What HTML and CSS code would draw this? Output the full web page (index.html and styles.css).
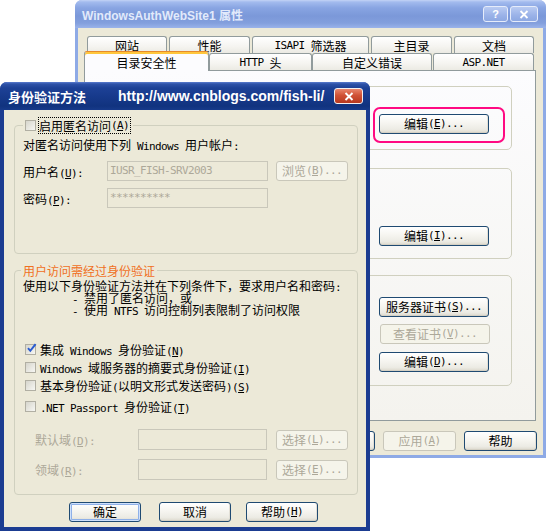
FILE: index.html
```html
<!DOCTYPE html>
<html lang="zh-CN">
<head>
<meta charset="utf-8">
<title>身份验证方法</title>
<link rel="stylesheet" href="styles.css">
</head>
<body>
<div class="win win-back">
  <div class="tbar tbar-inactive">
    <span class="tbar-title">WindowsAuthWebSite1 属性</span>
    <span class="tbar-btn tbar-help">?</span>
    <span class="tbar-btn tbar-x">
      <svg width="10" height="9" viewBox="0 0 10 9"><path d="M1.5 1 L8.5 8 M8.5 1 L1.5 8" stroke="#fff" stroke-width="1.8"/></svg>
    </span>
  </div>
  <div class="win-body back-body">
    <div class="tabrow tabrow-1">
      <div class="tab w80">网站</div>
      <div class="tab w81">性能</div>
      <div class="tab w117"><span class="m">ISAPI </span>筛选器</div>
      <div class="tab w81">主目录</div>
      <div class="tab w80">文档</div>
    </div>
    <div class="tabrow tabrow-2">
      <div class="tab tab-sel w125">目录安全性</div>
      <div class="tab w103"><span class="m">HTTP </span>头</div>
      <div class="tab w120">自定义错误</div>
      <div class="tab w101 gap1"><span class="m">ASP.NET</span></div>
    </div>
    <div class="pane">
      <div class="bgrp bg1">
        <div class="hl-wrap"><button class="btn bbtn">编辑<span class="m">(<u>E</u>)...</span></button></div>
      </div>
      <div class="bgrp bg2">
        <button class="btn bbtn bg2-btn">编辑<span class="m">(<u>I</u>)...</span></button>
      </div>
      <div class="bgrp bg3">
        <button class="btn bbtn bg3-b1">服务器证书<span class="m">(<u>S</u>)...</span></button>
        <button class="btn bbtn btn-dis bg3-b2">查看证书<span class="m">(<u>V</u>)...</span></button>
        <button class="btn bbtn bg3-b3">编辑<span class="m">(<u>D</u>)...</span></button>
      </div>
    </div>
    <div class="back-btns">
      <button class="btn wbtn">确定</button>
      <button class="btn wbtn">取消</button>
      <button class="btn wbtn btn-dis">应用<span class="m">(<u>A</u>)</span></button>
      <button class="btn wbtn">帮助</button>
    </div>
  </div>
</div>

<div class="win win-front">
  <div class="tbar tbar-active">
    <span class="ft-title">身份验证方法</span>
    <span class="ft-url">http://www.cnblogs.com/fish-li/</span>
    <span class="ft-close">
      <svg width="10" height="9" viewBox="0 0 10 9"><path d="M1.5 1 L8.5 8 M8.5 1 L1.5 8" stroke="#fff" stroke-width="1.9"/></svg>
    </span>
  </div>
  <div class="win-body front-body">
    <div class="grp fg1">
      <div class="legend lg1">
        <span class="cb"></span>
        <span class="focus">启用匿名访问<span class="m">(<u>A</u>)</span></span>
      </div>
      <div class="ftext">对匿名访问使用下列<span class="m"> Windows </span>用户帐户<span class="m">:</span></div>
      <div class="frow frow-user">
        <span class="flabel">用户名<span class="m">(<u>U</u>):</span></span>
        <span class="tbox tbox-long"><span class="m">IUSR_FISH-SRV2003</span></span>
        <button class="btn fbtn btn-dis">浏览<span class="m">(<u>B</u>)...</span></button>
      </div>
      <div class="frow frow-pwd">
        <span class="flabel">密码<span class="m">(<u>P</u>):</span></span>
        <span class="tbox tbox-long"><span class="m">**********</span></span>
      </div>
    </div>

    <div class="grp fg2">
      <div class="legend lg2">用户访问需经过身份验证</div>
      <div class="ftext2">使用以下身份验证方法并在下列条件下，要求用户名和密码<span class="m">:</span></div>
      <div class="ftext2 indent"><span class="m">- </span>禁用了匿名访问，或</div>
      <div class="ftext2 indent"><span class="m">- </span>使用<span class="m"> NTFS </span>访问控制列表限制了访问权限</div>

      <div class="cbrow cbrow-1">
        <span class="cb cb-on"><svg width="11" height="11" viewBox="0 0 11 11"><path d="M2 5.2 L4.3 7.8 L9.6 1.2" stroke="#2a5cd0" stroke-width="2" fill="none"/></svg></span>
        <span>集成<span class="m"> Windows </span>身份验证<span class="m">(<u>N</u>)</span></span>
      </div>
      <div class="cbrow">
        <span class="cb"></span>
        <span><span class="m">Windows </span>域服务器的摘要式身份验证<span class="m">(<u>I</u>)</span></span>
      </div>
      <div class="cbrow">
        <span class="cb"></span>
        <span>基本身份验证<span class="m">(</span>以明文形式发送密码<span class="m">)(<u>S</u>)</span></span>
      </div>
      <div class="cbrow cbrow-4">
        <span class="cb"></span>
        <span><span class="m">.NET Passport </span>身份验证<span class="m">(<u>T</u>)</span></span>
      </div>

      <div class="drow drow-1">
        <span class="dlabel">默认域<span class="m">(<u>D</u>):</span></span>
        <span class="tbox tbox-short"></span>
        <button class="btn dbtn btn-dis">选择<span class="m">(<u>L</u>)...</span></button>
      </div>
      <div class="drow drow-2">
        <span class="dlabel">领域<span class="m">(<u>R</u>):</span></span>
        <span class="tbox tbox-short"></span>
        <button class="btn dbtn btn-dis">选择<span class="m">(<u>E</u>)...</span></button>
      </div>
    </div>

    <div class="fbtns">
      <button class="btn wbtn btn-def">确定</button>
      <button class="btn wbtn fb-cancel">取消</button>
      <button class="btn wbtn fb-help">帮助<span class="m">(<u>H</u>)</span></button>
    </div>
  </div>
</div>
</body>
</html>
```

FILE: styles.css
```css
* { box-sizing: border-box; }
html, body { margin: 0; padding: 0; }
body {
  width: 547px;
  height: 532px;
  background: #ffffff;
  font-family: "Noto Sans CJK SC", sans-serif;
  font-size: 12px;
  color: #000;
  position: relative;
  overflow: hidden;
}
.m {
  font-family: "DejaVu Sans Mono", "Liberation Mono", monospace;
  font-size: 11px;
  letter-spacing: -0.62px;
  white-space: pre;
}
u { text-decoration: underline; text-underline-offset: 1px; }

/* windows */
.win {
  position: absolute;
  display: flex;
  flex-direction: column;
  border-radius: 7px 7px 0 0;
}
.win-back { left: 75px; top: 0; width: 471px; height: 458px; background: #8eaae6; }
.win-front { left: 0; top: 82px; width: 370px; height: 449px; background: #1b3c91; z-index: 5; }
.win-body { flex: 1; background: #ece9d8; }
.back-body { margin: 0 3px 3px; padding-top: 8px; }
.front-body { margin: 0 4px 4px; }

.tbar {
  height: 28px;
  flex: none;
  display: flex;
  align-items: center;
  border-radius: 7px 7px 0 0;
}
.tbar-inactive {
  background: linear-gradient(#c3d3f5 0, #a3bbee 2px, #88a4e2 8px, #7b98d9 16px, #839fdd 23px, #9ab3ea 28px);
  padding: 0 8px 0 7px;
}
.tbar-title {
  color: #e2eafb;
  font: bold 12px "Liberation Sans", "Noto Sans CJK SC", sans-serif;
}
.tbar-btn {
  height: 16px;
  border: 1px solid #e6ecfa;
  border-radius: 3px;
  background: linear-gradient(#b9cbf2, #9ab2e8 60%, #8da8e2);
  color: #fff;
  display: flex;
  align-items: center;
  justify-content: center;
  font: bold 11px "Liberation Sans", sans-serif;
}
.tbar-help { margin-left: auto; width: 25px; }
.tbar-x { margin-left: 2px; width: 28px; }

.tbar-active {
  background: linear-gradient(#5a7cce 0, #2e52a8 2px, #1d4196 6px, #173a8c 14px, #11337f 24px, #173a8a 28px);
  padding: 0 7px 0 8px;
  color: #fff;
}
.ft-title { font: bold 13px "Noto Sans CJK SC", sans-serif; }
.ft-url { margin-left: 32px; font: bold 14px "Liberation Sans", sans-serif; }
.ft-close {
  margin-left: auto;
  width: 29px;
  height: 16px;
  border: 1px solid #f4f0f0;
  border-radius: 3px;
  background: linear-gradient(#e9866c, #d05236 45%, #b8381e);
  display: flex;
  align-items: center;
  justify-content: center;
}

/* tabs */
.tabrow { display: flex; position: relative; }
.tabrow-1 { margin-left: 9px; height: 17px; gap: 2px; }
.tabrow-2 { margin-left: 6px; height: 18px; align-items: flex-start; z-index: 2; }
.tab {
  height: 17px;
  border: 1px solid #919b9c;
  border-bottom: none;
  border-radius: 3px 3px 0 0;
  background: linear-gradient(#ffffff, #f5f4f0 60%, #ebeae3);
  display: flex;
  align-items: center;
  justify-content: center;
  line-height: 15px;
  white-space: nowrap;
}
.tab-sel {
  height: 20px;
  margin-top: -2px;
  background: #fcfcfe;
  border-top: 1px solid #e68b2c;
  box-shadow: inset 0 2px 0 #ffc73c;
  padding-top: 1px;
}
.w80 { width: 80px; }
.w81 { width: 81px; }
.w117 { width: 117px; }
.w125 { width: 125px; }
.w103 { width: 103px; }
.w120 { width: 120px; }
.w101 { width: 101px; }
.gap1 { margin-left: 1px; }

.pane {
  margin: -1px 0 0 6px;
  width: 452px;
  height: 351px;
  border: 1px solid #919b9c;
  background: linear-gradient(#fcfcfe, #f4f3ee);
  position: relative;
  z-index: 1;
  display: flex;
  flex-direction: column;
}
.bgrp {
  margin-left: 9px;
  width: 418px;
  border: 1px solid #d0d0bf;
  border-radius: 5px;
  display: flex;
  flex-direction: column;
  align-items: flex-end;
}
.bg1 { margin-top: 15px; height: 64px; }
.bg2 { margin-top: 18px; height: 91px; }
.bg3 { margin-top: 16px; height: 111px; }
.hl-wrap {
  margin: 20px 6px 0 0;
  border: 2px solid #ff0a82;
  border-radius: 7px;
  padding: 5px 14px 7px 4px;
}
.bbtn { width: 110px; }
.bg2-btn { margin: 57px 22px 0 0; }
.bg3-b1 { margin: 21px 22px 0 0; }
.bg3-b2 { margin: 7px 21px 0 0; }
.bg3-b3 { margin: 8px 22px 0 0; }

.back-btns {
  display: flex;
  justify-content: flex-end;
  gap: 8px;
  margin-top: 10px;
  padding-right: 6px;
}

/* buttons */
.btn {
  height: 20px;
  padding: 0;
  border: 1px solid #1f4a72;
  border-radius: 3px;
  background: linear-gradient(#ffffff, #f6f5f0 45%, #ecebe4 80%, #dcd8cc);
  box-shadow: inset 0 -1px 0 #d4d0c4, inset -1px 0 0 #e2dfd6;
  font-family: "Noto Sans CJK SC", sans-serif;
  font-size: 12px;
  color: #000;
  display: flex;
  align-items: center;
  justify-content: center;
  line-height: 14px;
  white-space: nowrap;
}
.btn-dis {
  border-color: #c9c7ba;
  background: #f5f4ea;
  box-shadow: none;
  color: #aca899;
}
.btn-def {
  box-shadow: inset 0 0 0 1px #cee0fb, inset 0 0 0 2px #8fb0e8;
}
.wbtn { width: 73px; }

/* front groups */
.grp { border: 1px solid #d0d0bf; border-radius: 4px; }
.legend {
  display: flex;
  align-items: center;
  width: fit-content;
  height: 17px;
  margin-top: -9px;
  padding: 0 2px;
  background: #ece9d8;
}
.fg1 { margin: 15px 8px 0 10px; height: 129px; }
.lg1 { margin-left: 8px; }
.focus {
  margin-left: 2px;
  height: 17px;
  border: 1px dotted #000;
  display: flex;
  align-items: center;
  padding-right: 1px;
}
.ftext { margin-top: 3px; padding-left: 8px; line-height: 16px; height: 16px; }
.frow { display: flex; align-items: center; padding-left: 8px; height: 20px; }
.frow-user { margin-top: 8px; }
.frow-pwd { margin-top: 7px; }
.flabel { width: 84px; flex: none; }
.tbox {
  height: 20px;
  border: 1px solid #c9c7ba;
  background: #ece9d8;
  color: #aca899;
  padding: 0 2px;
  display: flex;
  align-items: center;
  flex: none;
  line-height: 14px;
  overflow: hidden;
}
.tbox-long { width: 161px; }
.tbox-short { width: 129px; height: 21px; }
.fbtn { width: 72px; margin-left: 8px; }

.fg2 { margin: 16px 8px 0 10px; height: 225px; }
.lg2 { margin-left: 6px; color: #f0701e; }
.ftext2 { padding-left: 8px; line-height: 12px; height: 12px; white-space: nowrap; }
.lg2 + .ftext2 { margin-top: 1px; }
.indent { padding-left: 57px; }

.cb {
  width: 11px;
  height: 11px;
  flex: none;
  border: 1px solid #b1afa3;
  background: linear-gradient(135deg, #d6d5cc, #f7f7f3);
  display: inline-flex;
  position: relative;
  overflow: visible;
}
.cb svg { position: absolute; left: 0; top: -2px; }
.cbrow { display: flex; align-items: center; height: 18px; padding-left: 10px; gap: 4px; white-space: nowrap; }
.cbrow-1 { margin-top: 24px; }
.cbrow-4 { margin-top: 3px; }

.drow { display: flex; align-items: center; height: 21px; padding-left: 20px; color: #aca899; }
.drow-1 { margin-top: 14px; }
.drow-2 { margin-top: 9px; }
.dlabel { width: 103px; flex: none; }
.dbtn { width: 72px; margin-left: 9px; }

.fbtns { display: flex; margin-top: 7px; padding-left: 65px; }
.fbtns .wbtn { width: 72px; }
.fb-cancel { margin-left: 18px; }
.fb-help { margin-left: 15px; }
```
